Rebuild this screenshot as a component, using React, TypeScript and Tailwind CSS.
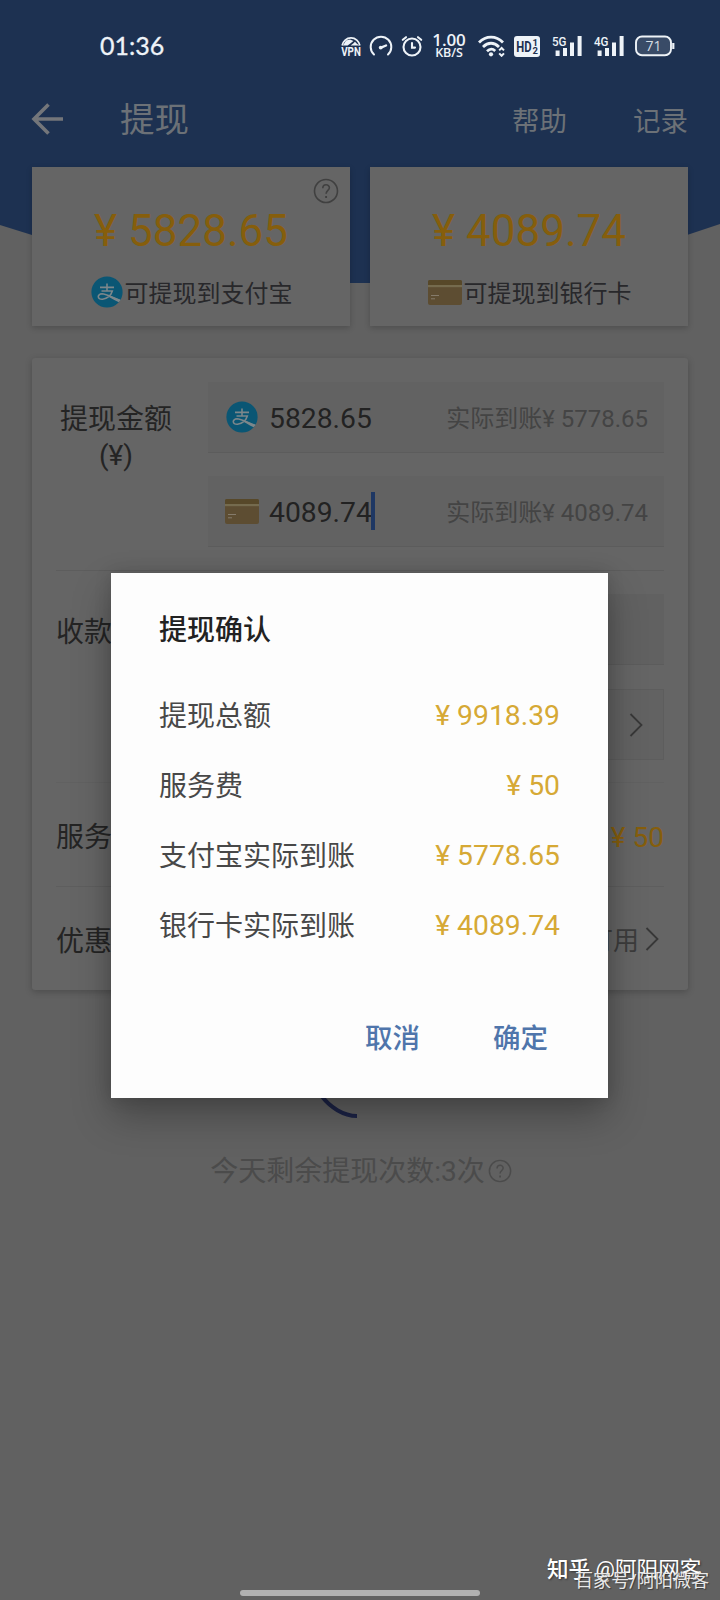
import React from 'react';

const Alipay = ({ className }: { className: string }) => (
  <svg viewBox="0 0 32 32" className={className}>
    <defs>
      <clipPath id="disc">
        <circle cx="16" cy="16" r="15.6" />
      </clipPath>
    </defs>
    <g clipPath="url(#disc)">
      <rect width="32" height="32" fill="#0a5674" />
      <g fill="none" stroke="#7c878b" strokeWidth="1.6">
        <path d="M9 11.4H23M16 7.6V15M10.5 15H21.3C20 19.4 16 22.6 11.5 23.2C6 23.6 6 18 11 17.8C15 17.8 20 20.8 32 25.5" />
      </g>
      <path d="M19 19.8L32 25V27.6C26 26 22 23.4 18 21Z" fill="#7c878b" />
    </g>
  </svg>
);

const BankCard = ({ className }: { className: string }) => (
  <svg viewBox="0 0 34 25" className={className}>
    <rect width="34" height="25" rx="2" fill="#5d4d32" />
    <path d="M0 2a2 2 0 0 1 2-2H32a2 2 0 0 1 2 2V5H0Z" fill="#574829" />
    <rect y="5" width="34" height="2.2" fill="#756b4e" />
    <path d="M3 15.5H11M3 18.8H7" stroke="#857b6b" strokeWidth="1" />
  </svg>
);

const Help = ({ className }: { className: string }) => (
  <svg viewBox="0 0 26 26" className={className} fill="none" stroke="currentColor" strokeWidth="1.6">
    <circle cx="13" cy="13" r="11.5" />
    <path d="M9.8 10.2C9.8 5.6 16.4 5.8 16.4 9.8C16.4 12.4 13.1 12.6 13.1 15.8" />
    <path d="M13.1 18V20" strokeWidth="1.9" />
  </svg>
);

const Chevron = ({ className }: { className: string }) => (
  <svg viewBox="0 0 14 24" className={className} fill="none" stroke="#383838" strokeWidth="1.8">
    <path d="M1.5 1L12.5 12L1.5 23" />
  </svg>
);

const Signal = ({ label }: { label: string }) => (
  <svg viewBox="0 0 32 24" className="h-6 w-8 overflow-visible" fill="#eef3f8">
    <text x="0" y="11.5" fontSize="13.5" fontWeight="500" fontFamily="Roboto, sans-serif" textLength="14.5" lengthAdjust="spacingAndGlyphs">
      {label}
    </text>
    <rect x="3.6" y="16.5" width="4" height="5.5" />
    <rect x="11" y="14" width="4" height="8" />
    <rect x="18" y="8.5" width="4" height="13.5" />
    <rect x="25.6" y="2" width="4" height="20" />
  </svg>
);

const StatusBar = () => (
  <div className="flex h-[92px] items-center text-[#eef3f8]">
    <span className="ml-[100px] w-[241px] pb-0.5 font-[Lato] text-[25px] font-normal leading-none [-webkit-text-stroke:0.3px_#eef3f8]">01:36</span>
    <svg viewBox="0 0 20 22" className="h-[22px] w-5 overflow-visible" fill="none" stroke="#eef3f8">
      <path d="M1.2 10.5A8.9 8.9 0 0 1 18.8 10.5" strokeWidth="1.8" />
      <path d="M2 10.6L5 5.6L9 4.6L12.4 6L9.6 8.2L6.6 10.6ZM9.6 10.6L12.2 8.6L14 6.8L15.6 8.4L18.2 10.6Z" fill="#eef3f8" stroke="none" />
      <text x="0.2" y="20.8" fontSize="13" fontWeight="700" fontFamily="Roboto, sans-serif" fill="#eef3f8" stroke="none" textLength="19.6" lengthAdjust="spacingAndGlyphs">VPN</text>
    </svg>
    <svg viewBox="0 0 24 22" className="ml-2 h-[22px] w-6" fill="none" stroke="#eef3f8" strokeWidth="2" strokeLinecap="round">
      <path d="M5 19.5A10.3 10.3 0 1 1 19 19.5" />
      <path d="M12 12.6L17 10.5" strokeWidth="2.4" />
      <circle cx="11.7" cy="12.6" r="1.9" fill="#eef3f8" stroke="none" />
    </svg>
    <svg viewBox="0 0 22 22" className="ml-2 h-[22px] w-[22px]" fill="none" stroke="#eef3f8" strokeWidth="2.1" strokeLinecap="round">
      <circle cx="11" cy="12" r="8.5" />
      <path d="M11 8V12.6H14M1.8 4.8L5 2.2M20.2 4.8L17 2.2" />
    </svg>
    <div className="ml-2.5 flex w-8 flex-col items-center font-['Open_Sans'] font-semibold">
      <span className="text-[17px] leading-[13px] tracking-[-0.1px]">1.00</span>
      <span className="text-[12.5px] leading-[13px] tracking-[-0.1px]">KB/S</span>
    </div>
    <svg viewBox="0 0 28 22" className="ml-[13px] h-[22px] w-7" fill="none" stroke="#eef3f8" strokeWidth="2.8">
      <path d="M1 7.5C8 .3 18 .3 25 7.5M5 12C10 7 16 7 21 12M9 16.2C11.8 13.6 14.8 13.6 17.2 16" />
      <circle cx="13" cy="19.3" r="2.1" fill="#eef3f8" stroke="none" />
      <path d="M21.2 15.4L23.6 13L26 15.4M21.2 18.4L23.6 20.8L26 18.4" strokeWidth="2" />
    </svg>
    <svg viewBox="0 0 26 21" className="ml-2 h-[21px] w-[26px]">
      <rect width="26" height="21" rx="3" fill="#eef3f8" />
      <g fontFamily="Roboto, sans-serif" fontWeight="700" fill="#1d3151">
        <text x="2.2" y="16" fontSize="15" textLength="15.3" lengthAdjust="spacingAndGlyphs">HD</text>
        <text x="18.6" y="9.6" fontSize="9.5">1</text>
        <text x="18.4" y="18.2" fontSize="9.5">2</text>
      </g>
    </svg>
    <div className="ml-3"><Signal label="5G" /></div>
    <div className="ml-[9.5px]"><Signal label="4G" /></div>
    <svg viewBox="0 0 40 22" className="ml-[9px] h-[22px] w-10">
      <rect x="1" y="1.5" width="35" height="18.8" rx="6" fill="#394b67" stroke="#eef3f8" strokeWidth="1.9" />
      <path d="M38.3 8V14" stroke="#eef3f8" strokeWidth="2.2" />
      <text x="18.5" y="16" textAnchor="middle" fontSize="14" fontFamily="'Open Sans', sans-serif" fill="#d4dbe3">71</text>
    </svg>
  </div>
);

const Balance = ({ amount, label, icon, help }: { amount: string; label: string; icon: React.ReactNode; help?: boolean }) => (
  <div className="relative flex h-[159px] flex-1 flex-col items-center bg-[#656565] pt-[39px] shadow-[0_2px_6px_rgba(0,0,0,0.2)]">
    {help && <Help className="absolute right-[11px] top-[11px] h-[26px] w-[26px] text-[#404040]" />}
    <span className="font-[Roboto] text-[44px] leading-[50px] text-[#865e0c]">{amount}</span>
    <span className="mt-[18px] flex h-9 items-center pl-px text-[24px] leading-9 text-[#28282b]">
      {icon}
      <span className="pt-[3px]">{label}</span>
    </span>
  </div>
);

const Field = ({ icon, amount, actual, caret }: { icon: React.ReactNode; amount: string; actual: string; caret?: boolean }) => (
  <div className="flex h-[71px] items-center border-b border-[#5c5c5c] bg-[#626262] pl-[17px] pr-4">
    <div className="flex w-[34px] justify-center">{icon}</div>
    <span className="ml-[10px] pt-[3px] font-[Roboto] text-[28.3px] leading-9 text-[#222222]">{amount}</span>
    {caret && <span className="-ml-px h-[38px] w-1 bg-[#1e3763]" />}
    <span className="ml-auto pt-[3px] text-[24px] leading-9 text-[#444444]">{actual}</span>
  </div>
);

const WithdrawForm = () => (
  <div className="mx-8 mt-8 flex h-[632px] flex-col rounded-[3px] bg-[#656565] px-6 pt-6 text-[28px] text-[#242424] shadow-[0_2px_7px_rgba(0,0,0,0.22)]">
    <div className="flex h-[189px] border-b border-[#5d5d5d]">
      <div className="w-[120px] pt-[19px] text-center leading-[37px]">
        提现金额
        <br />
        <span className="relative -top-px">(¥)</span>
      </div>
      <div className="ml-8 flex flex-1 flex-col gap-[23px]">
        <Field icon={<Alipay className="h-8 w-8" />} amount="5828.65" actual="实际到账¥ 5778.65" />
        <Field icon={<BankCard className="h-[25px] w-[34px]" />} amount="4089.74" actual="实际到账¥ 4089.74" caret />
      </div>
    </div>
    <div className="flex h-[212px] border-b border-[#616161] pt-[23px]">
      <div className="w-[152px] pt-[21px] leading-9">收款账户</div>
      <div className="flex flex-1 flex-col gap-6">
        <div className="h-[71px] border-b border-[#5c5c5c] bg-[#616161]" />
        <div className="flex h-[71px] items-center justify-end border border-[#5d5d5d] bg-[#626262] pr-5">
          <Chevron className="h-6 w-[14px]" />
        </div>
      </div>
    </div>
    <div className="flex h-[104px] items-center justify-between border-b border-[#5e5e5e] pt-[7px]">
      <span>服务费</span>
      <span className="pb-px text-[#865e0c]">¥ 50</span>
    </div>
    <div className="flex flex-1 items-center justify-between">
      <span className="pt-[6px]">优惠券</span>
      <span className="flex items-center pr-[5px] text-[26px] text-[#3c3c3c]">
        <span className="pt-[6px]">无可用</span>
        <Chevron className="ml-[6px] h-6 w-[14px]" />
      </span>
    </div>
  </div>
);

const rows = [
  ['提现总额', '¥ 9918.39'],
  ['服务费', '¥ 50'],
  ['支付宝实际到账', '¥ 5778.65'],
  ['银行卡实际到账', '¥ 4089.74'],
];

const Dialog = () => (
  <div className="absolute left-[111px] top-[573px] flex h-[525px] w-[497px] flex-col bg-[#fdfdfd] px-12 pt-[38px] shadow-[0_18px_36px_rgba(0,0,0,0.28),0_0_16px_rgba(0,0,0,0.14)]">
    <h2 className="text-[28px] font-medium leading-10 text-[#222222]">提现确认</h2>
    <div className="mt-[31px]">
      {rows.map(([label, value]) => (
        <div key={label} className="flex h-[70px] items-center justify-between text-[28px] leading-10">
          <span className="pb-px text-[#484848]">{label}</span>
          <span className="pb-[3px] font-[Roboto] text-[28.3px] text-[#d6a935]">{value}</span>
        </div>
      ))}
    </div>
    <div className="mt-[57px] flex justify-end gap-[73px] pr-3 text-[27.5px] font-medium leading-10 text-[#4f75ab]">
      <button>取消</button>
      <button>确定</button>
    </div>
  </div>
);

export default function App() {
  return (
    <div className="relative h-[1600px] w-[720px] overflow-hidden bg-[#616161] font-['Roboto','Noto_Sans_CJK_SC',sans-serif]">
      <svg viewBox="0 0 720 284" className="absolute left-0 top-0 h-[284px] w-[720px]">
        <path d="M0 0H720V224L687 235Q520 283 370 283H350Q200 283 32 235L0 225Z" fill="#1d3151" />
      </svg>
      <div className="relative">
        <StatusBar />
        <div className="flex h-[75px] items-start text-[#6c7177]">
          <svg viewBox="0 0 32 32" className="ml-[31px] mt-[11px] h-8 w-8" fill="none" stroke="#74767a" strokeWidth="3.6">
            <path d="M17.5 1.5L3 16L17.5 30.5M2.5 16H32" />
          </svg>
          <span className="ml-[57px] mt-[5px] text-[34.5px] leading-[46px]">提现</span>
          <span className="ml-auto mt-[9.5px] text-[27.5px] leading-[40px]">帮助</span>
          <span className="ml-[66px] mr-8 mt-[9.5px] text-[27.5px] leading-[40px]">记录</span>
        </div>
        <div className="mx-8 flex gap-5">
          <Balance help amount="¥ 5828.65" label="可提现到支付宝" icon={<Alipay className="mr-[2px] h-8 w-8" />} />
          <Balance amount="¥ 4089.74" label="可提现到银行卡" icon={<BankCard className="mr-[2px] h-[25px] w-[34px]" />} />
        </div>
        <WithdrawForm />
        <div className="flex h-[128px] justify-center">
          <svg viewBox="0 0 80 128" className="h-32 w-20" fill="none" stroke="#1c2346" strokeWidth="4">
            <path d="M0 104C10 118 24 126 37 126" />
          </svg>
        </div>
        <div className="mt-9 flex items-center justify-center pl-0.5 text-[28px] leading-9 text-[#4b4b4b]">
          今天剩余提现次数:3次
          <Help className="mb-[3px] ml-[3px] h-6 w-6" />
        </div>
      </div>
      <Dialog />
      <div className="absolute bottom-[4px] left-[240px] h-[6px] w-[240px] rounded-full bg-[#b1b1b1]" />
      <div className="absolute left-[547px] top-[1555px] whitespace-nowrap text-[21.6px] leading-[30px] text-white [text-shadow:1px_1px_2px_#0007]">
        <span className="font-medium">知乎</span> @阿阳网客
      </div>
      <div className="absolute left-[575px] top-[1568px] whitespace-nowrap text-[18.1px] leading-[26px] text-[#e8e8e8] [text-shadow:1px_1px_1px_#0006]">百家号/阿阳微客</div>
    </div>
  );
}
